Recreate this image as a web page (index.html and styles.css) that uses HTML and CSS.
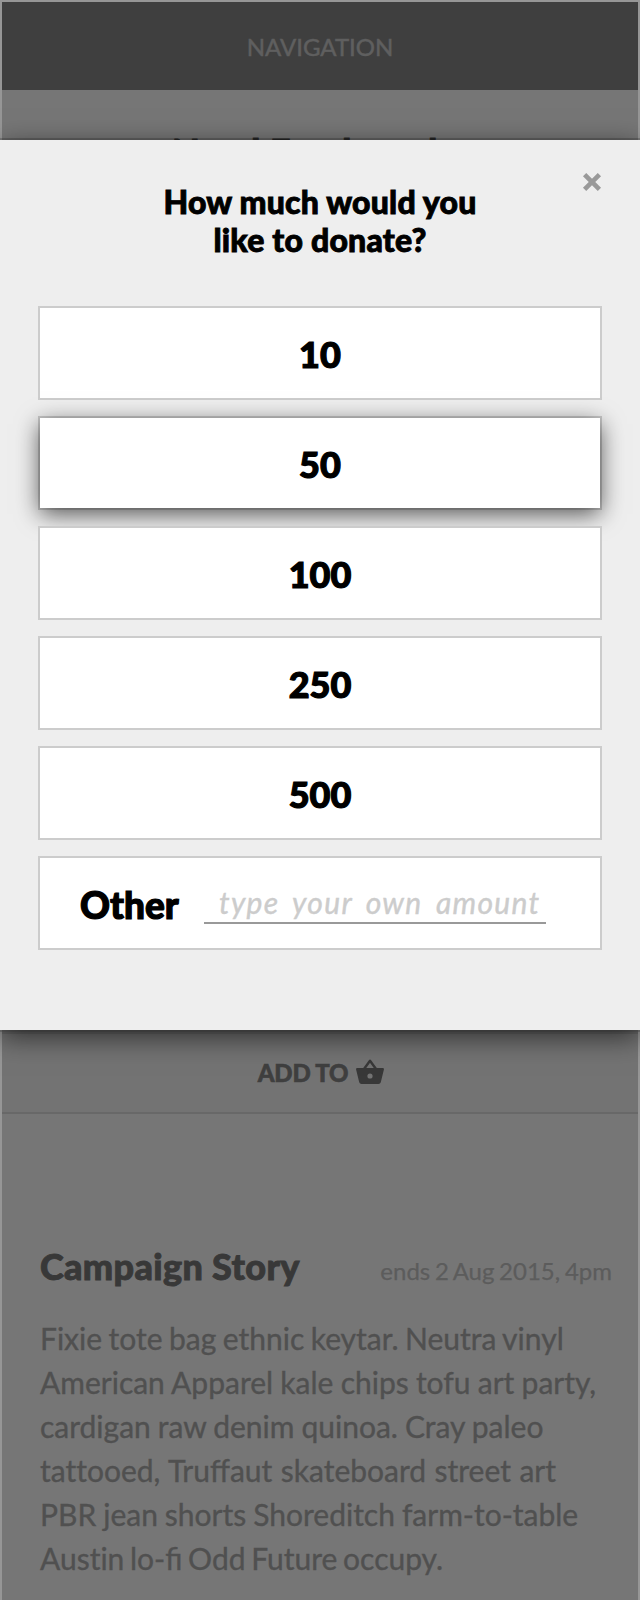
FILE: index.html
```html
<!DOCTYPE html>
<html lang="en">
<head>
<meta charset="utf-8">
<title>Donate</title>
<link rel="stylesheet" href="styles.css">
</head>
<body>
<div class="page">
  <nav class="nav">NAVIGATION</nav>
  <h1 class="campaign-title">Need Feathered</h1>
  <div class="add-to">
    <span>ADD TO</span>
    <svg class="basket" viewBox="0 0 28 26" aria-hidden="true">
      <path d="M8 10 L14 1.8 L20 10" fill="none" stroke="currentColor" stroke-width="2.4" stroke-linejoin="round"/>
      <path fill="currentColor" fill-rule="evenodd" d="M1.2 9H26.8Q28.2 9 27.9 10.4L24.8 23.2Q24.3 25 22.5 25H5.5Q3.7 25 3.2 23.2L.1 10.4Q-.2 9 1.2 9ZM14 14.4a2.6 2.6 0 1 0 0 5.2a2.6 2.6 0 1 0 0-5.2Z"/>
    </svg>
  </div>
  <section class="story">
    <header class="story-head">
      <h2 class="story-title">Campaign Story</h2>
      <span class="story-date">ends 2 Aug 2015, 4pm</span>
    </header>
    <p class="story-text"><span class="line snug">Fixie tote bag ethnic keytar. Neutra vinyl</span><span class="line loose">American Apparel kale chips tofu art party,</span><span class="line">cardigan raw denim quinoa. Cray paleo</span><span class="line wide">tat&zwnj;tooed, Truffaut skateboard street art</span><span class="line">PBR jean shorts Shoreditch farm-to-table</span><span class="line tight">Aust&zwnj;in lo-fi Odd Future occupy.</span></p>
  </section>
</div>
<div class="modal" role="dialog">
  <svg class="close" viewBox="0 0 20 20" aria-label="Close"><path d="M2.6 2.6L17.4 17.4M17.4 2.6L2.6 17.4"/></svg>
  <h2 class="modal-title">How much would you<br>like to donate?</h2>
  <div class="amounts">
    <div class="amount">10</div>
    <div class="amount selected">50</div>
    <div class="amount">100</div>
    <div class="amount">250</div>
    <div class="amount">500</div>
    <div class="amount other"><span class="other-label">Other</span><span class="field">type your own amount</span></div>
  </div>
</div>
</body>
</html>
```
FILE: styles.css
```css
* { box-sizing: border-box; }
body { margin: 0; font-family: Lato, sans-serif; position: relative; height: 1600px; overflow: hidden; }
h1, h2, p { margin: 0; }
.page { height: 1600px; background: #767676; border: 2px solid #969696; border-bottom: 0; overflow: hidden; }
.nav { height: 88px; background: #3f3f3f; color: #5f5f5f; font-size: 24px; -webkit-text-stroke: .5px; line-height: 90px; text-align: center; }
.campaign-title { height: 942px; padding: 39px 0 0 170px; font-size: 36px; line-height: 44px; font-weight: 900; letter-spacing: .6px; -webkit-text-stroke: .9px; color: #2c2c2c; white-space: nowrap; }
.add-to { height: 82px; border-top: 2px solid #686868; border-bottom: 2px solid #686868; background: #737373; display: flex; align-items: center; justify-content: center; gap: 8px; padding: 0 0 2px 2px; font-size: 24px; font-weight: 900; letter-spacing: -.2px; -webkit-text-stroke: .6px; color: #3f3f3f; }
.basket { width: 28px; height: 26px; color: #383838; }
.story { padding: 128px 26px 0 38px; }
.story-head { display: flex; justify-content: space-between; align-items: baseline; }
.story-title { font-size: 36px; line-height: 48px; font-weight: 900; letter-spacing: .35px; -webkit-text-stroke: .9px; color: #383838; white-space: nowrap; }
.story-date { font-size: 24px; word-spacing: -1.5px; -webkit-text-stroke: .25px; color: #5c5c5c; white-space: nowrap; }
.story-text { margin-top: 26px; font-size: 30px; line-height: 44px; -webkit-text-stroke: .35px; color: #505050; white-space: nowrap; }
.line { display: block; word-spacing: -.7px; }
.snug { word-spacing: -1.2px; }
.loose { word-spacing: -.45px; }
.wide { word-spacing: .8px; }
.tight { word-spacing: -2px; }
.modal { position: absolute; top: 140px; left: 0; width: 640px; height: 890px; padding: 43px 38px 0; background: #eee; box-shadow: 0 0 0 2px rgba(0,0,0,.18), 0 7px 26px rgba(0,0,0,.6); }
.close { position: absolute; top: 32px; right: 38px; width: 20px; height: 20px; fill: none; stroke: #999; stroke-width: 4.6; }
.modal-title { height: 123px; font-size: 32px; line-height: 38px; font-weight: 900; letter-spacing: .2px; -webkit-text-stroke: .9px; text-align: center; color: #000; }
.amounts { display: flex; flex-direction: column; gap: 16px; }
.amount { height: 94px; border: 2px solid #ccc; background: #fff; font-size: 36px; line-height: 93px; font-weight: 900; -webkit-text-stroke: 1.2px; text-align: center; color: #000; }
.selected { height: 90px; margin: 2px; border: 0; box-shadow: 0 0 0 2px rgba(0,0,0,.16), 0 6px 22px rgba(0,0,0,.65); }
.amount.other { display: flex; align-items: center; padding-left: 40px; }
.other-label { width: 99px; padding-top: 2px; font-size: 37px; text-align: left; }
.field { width: 342px; height: 42px; margin: -1px 0 0 25px; padding-left: 15px; border-bottom: 2px solid #999; color: #ccc; font-size: 30px; font-weight: 400; font-style: italic; -webkit-text-stroke: .4px; line-height: 40px; text-align: left; letter-spacing: 1.3px; word-spacing: 5px; white-space: nowrap; }
```
